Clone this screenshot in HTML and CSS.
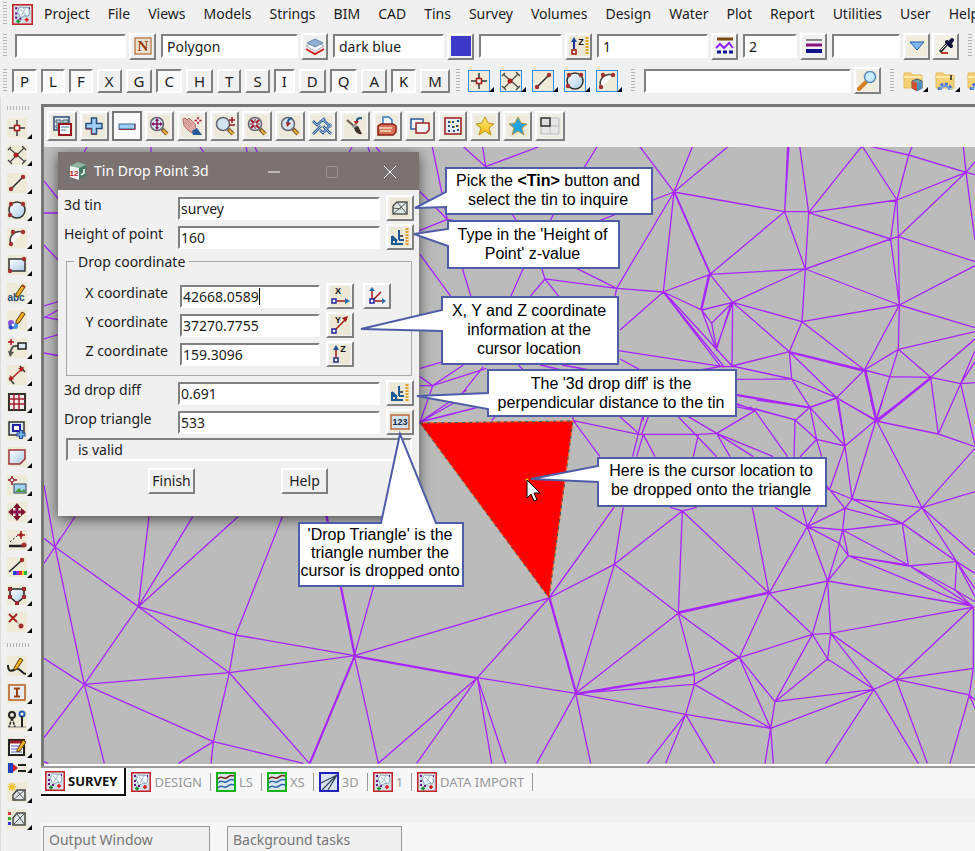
FILE: index.html
```html
<!DOCTYPE html>
<html lang="en">
<head>
<meta charset="utf-8">
<title>Tin Drop Point 3d</title>
<link rel="stylesheet" href="styles.css">
</head>
<body>
<svg class="sprite" aria-hidden="true">
  <defs>
    <linearGradient id="glass" x1="0" y1="0" x2="1" y2="1"><stop offset="0" stop-color="#fff"/><stop offset="1" stop-color="#a9cbe6"/></linearGradient>
    <linearGradient id="gold" x1="0" y1="0" x2="0" y2="1"><stop offset="0" stop-color="#fff27a"/><stop offset="1" stop-color="#f3b416"/></linearGradient>
  </defs>
  <symbol id="plan" viewBox="0 0 20 20"><rect x=".75" y=".75" width="18.500" height="18.500" fill="#cfe0e6" stroke="#c42028" stroke-width="1.500"/><path d="M6 6c0-3 3-4 5-2 3-2 7 0 5 3 2 3-1 6-4 4-2 3-6 1-5-1-2-1-2-3-1-4z" fill="#f4fafc" stroke="#86a8b8"/><path d="M8 5l6 6M13 4l-4 7" stroke="#a8c0cc"/><path d="M3 3h2v2H3zM3 8h2v2H3zM3 12h2v2H3zM7 13h2v2H7zM16 3h1v2h-1z" fill="#70108a"/><path d="M6 14.500v4M4 16.500h4" stroke="#0a8a2a" stroke-width="1.500"/><path d="M14 13v4M12 15h4" stroke="#e8101a" stroke-width="1.500"/></symbol>
  <symbol id="section" viewBox="0 0 20 20"><rect x="1" y="1" width="18" height="18" fill="#d8e8ea" stroke="#12b41a" stroke-width="2"/><path d="M2 7c3-4 5 0 8-1s4-4 8-2" fill="none" stroke="#7c2020" stroke-width="1.500"/><path d="M2 11c3-4 5 0 8-1s4-4 8-2M2 16c3-4 5 0 8-1s4-4 8-2" fill="none" stroke="#3366b0" stroke-width="1.500"/></symbol>
  <symbol id="persp" viewBox="0 0 20 20"><rect x="1" y="1" width="18" height="18" fill="#d6e2f0" stroke="#2222b8" stroke-width="2"/><path d="M2 11L18 3 3 18M9 18L18 3" fill="none" stroke="#345" stroke-width="1.200"/><path d="M6 15L16 4" stroke="#345" stroke-dasharray="2 2"/></symbol>
  <symbol id="nbox" viewBox="0 0 20 20"><rect x="1" y="1" width="18" height="18" fill="#eceadc"/><rect x="2" y="2" width="16" height="16" fill="#e9e2d0" stroke="#a8541a"/></symbol>
  <symbol id="layers" viewBox="0 0 20 20"><path d="M1 13l9 5 9-5" fill="none" stroke="#c22" stroke-width="2"/><path d="M1 10l9-4 9 4-9 5z" fill="#fff" stroke="#aab"/><path d="M2 7l8-4 8 4-8 4z" fill="#8fb0d4" stroke="#6888a8"/></symbol>
  <symbol id="swatch" viewBox="0 0 20 20"><rect width="20" height="20" fill="#3b3bc8"/></symbol>
  <symbol id="zruler" viewBox="0 0 20 20"><rect width="20" height="20" fill="#ebe7d4"/><path d="M5 13V4" stroke="#1d2b9a" stroke-width="2"/><path d="M2 6l3-5 3 5z" fill="#1d4b9a"/><rect x="3" y="14" width="4" height="4" fill="#fff" stroke="#a01010" stroke-width="1.500"/><path d="M18 1v18" stroke="#e0a820" stroke-width="3" stroke-dasharray="2 1"/></symbol>
  <symbol id="styles" viewBox="0 0 20 20"><path d="M2 3h16" stroke="#7a4a12" stroke-width="3"/><path d="M1 12l4-4 4 4 5-5 4 5" fill="none" stroke="#8a20ff" stroke-width="2"/><path d="M2 16h4M8 16h4M14 16h4" stroke="#10108a" stroke-width="3"/></symbol>
  <symbol id="weights" viewBox="0 0 20 20"><path d="M2 4h16" stroke="#222"/><path d="M2 9h16" stroke="#8a1080" stroke-width="3"/><path d="M2 15h16" stroke="#10108a" stroke-width="4"/></symbol>
  <symbol id="down" viewBox="0 0 20 20"><rect width="20" height="20" fill="#f0ecda"/><path d="M3 6h14l-7 8z" fill="#7db8f0" stroke="#2158a8"/></symbol>
  <symbol id="dropper" viewBox="0 0 20 20"><rect width="20" height="20" fill="#f3f0e4"/><path d="M5 17h7" stroke="#c33" stroke-width="2"/><path d="M4 16l8-9" stroke="#333" stroke-width="3"/><path d="M5 14l6-6" stroke="#dde"/><path d="M11 6l4 4M13 8l3-4" stroke="#10103a" stroke-width="4" stroke-linecap="round"/></symbol>
  <symbol id="point" viewBox="0 0 20 20"><path d="M10 2v16M2 10h16" stroke="#333" stroke-width="1.500"/><rect x="7.500" y="7.500" width="5" height="5" fill="#fff" stroke="#a81414" stroke-width="1.500"/></symbol>
  <symbol id="cross" viewBox="0 0 20 20"><path d="M2 3l16 14M3 17L17 3M1 5l3-3M15 1l4 4M1 15l4 4M15 19l4-4" stroke="#444" stroke-width="1.200" fill="none"/><circle cx="9" cy="10" r="2.500" fill="#a82020"/></symbol>
  <symbol id="line" viewBox="0 0 20 20"><path d="M4 16L16 4" stroke="#222" stroke-width="1.500"/><circle cx="4" cy="16" r="2.200" fill="#a33030"/><circle cx="16" cy="4" r="2.200" fill="#a33030"/></symbol>
  <symbol id="circle" viewBox="0 0 20 20"><circle cx="10" cy="10" r="8" fill="url(#glass)" stroke="#333" stroke-width="1.500"/><circle cx="4" cy="4" r="2.200" fill="#a33030"/><circle cx="16" cy="4" r="2.200" fill="#a33030"/><circle cx="3" cy="15" r="2.200" fill="#a33030"/></symbol>
  <symbol id="arc" viewBox="0 0 20 20"><path d="M4 17C1 8 7 2 16 4L5 16" fill="#fff"/><path d="M4 17C1 8 7 2 16 4" fill="none" stroke="#444" stroke-width="1.500"/><circle cx="4" cy="16" r="2.200" fill="#a33030"/><circle cx="6" cy="4" r="2.200" fill="#a33030"/><circle cx="16" cy="4" r="2.200" fill="#a33030"/></symbol>
  <symbol id="rect" viewBox="0 0 20 20"><rect x="2" y="4" width="16" height="12" fill="url(#glass)" stroke="#333" stroke-width="1.500"/><circle cx="17" cy="4" r="2.200" fill="#a33030"/><circle cx="3" cy="16" r="2.200" fill="#a33030"/></symbol>
  <symbol id="pencil" viewBox="0 0 20 20"><path d="M9 11l6-9 3 2-6 9-3 1z" fill="#f0b020" stroke="#5a3a10"/><path d="M15 2l3 2" stroke="#b03020" stroke-width="2"/></symbol>
  <symbol id="paint" viewBox="0 0 20 20"><path d="M9 11l6-9 3 2-6 9-3 1z" fill="#f0b020" stroke="#5a3a10"/><circle cx="4" cy="13" r="3" fill="#8a50e0"/><circle cx="8" cy="16" r="3" fill="#4090f0"/><circle cx="4" cy="17" r="2.500" fill="#2b50d0"/><circle cx="6" cy="15" r="1.500" fill="#fff"/></symbol>
  <symbol id="leader" viewBox="0 0 20 20"><path d="M4 1v6M1 4h6" stroke="#b01020" stroke-width="1.500"/><path d="M12 8H8q-4 0-5 9" fill="none" stroke="#555" stroke-width="2"/><rect x="11" y="5" width="8" height="6" fill="#dbe8f2" stroke="#222" stroke-width="1.500"/><path d="M1 13l2 6 4-5z" fill="#555"/></symbol>
  <symbol id="dim" viewBox="0 0 20 20"><path d="M2 13l5 6M13 1l5 6" stroke="#333" stroke-width="1.500"/><path d="M4 14L15 4" stroke="#b02020" stroke-width="1.500"/><path d="M2 16l1-6 4 4zM17 2l-6 1 4 4z" fill="#b02020"/></symbol>
  <symbol id="grid" viewBox="0 0 20 20"><rect x="2" y="2" width="16" height="16" fill="#f4e8e8" stroke="#333" stroke-width="2"/><path d="M2 7h16M2 12h16M7 2v16M12 2v16" stroke="#a02030" stroke-width="1.500"/></symbol>
  <symbol id="addbox" viewBox="0 0 20 20"><rect x="2" y="2" width="15" height="13" fill="#dce8f0" stroke="#333" stroke-width="1.500"/><rect x="6" y="5" width="7" height="6" fill="#fff" stroke="#2020a0" stroke-width="2"/><path d="M14 10v9M9.500 14.500h9" stroke="#204890" stroke-width="4"/><path d="M14 11v7M10.500 14.500h7" stroke="#70b8f0" stroke-width="2"/></symbol>
  <symbol id="poly" viewBox="0 0 20 20"><path d="M2 3h16v9l-5 5H2z" fill="url(#glass)" stroke="#a03038" stroke-width="1.500"/></symbol>
  <symbol id="image" viewBox="0 0 20 20"><rect x="7" y="9" width="12" height="9" fill="#9fd2f4" stroke="#345"/><path d="M8 17l4-4 3 3 2-2 2 3z" fill="#4a9a3a"/><path d="M5 1v9M1 5h9" stroke="#8a1020" stroke-width="1.500"/><circle cx="5" cy="5" r="2" fill="#fff" stroke="#8a1020"/></symbol>
  <symbol id="move" viewBox="0 0 20 20"><path d="M10 3v14M3 10h14" stroke="#8a1050" stroke-width="3"/><path d="M10 1l4 5H6zM10 19l4-5H6zM1 10l5-4v8zM19 10l-5-4v8z" fill="#7a1030"/></symbol>
  <symbol id="offset" viewBox="0 0 20 20"><path d="M2 16h15" stroke="#222" stroke-width="2.500"/><path d="M3 12l7-6" stroke="#222" stroke-dasharray="2 2"/><path d="M14 1v8M10 5h8" stroke="#a02020" stroke-width="1.500"/><circle cx="14" cy="5" r="2" fill="#a02020"/><circle cx="17" cy="15" r="2.500" fill="#a33030"/></symbol>
  <symbol id="colour" viewBox="0 0 20 20"><path d="M2 15L15 3" stroke="#222" stroke-width="1.500"/><circle cx="15" cy="3" r="2.200" fill="#a33030"/><path d="M6 14h3v4H6z" fill="#2040e0"/><path d="M9 14h3v4H9z" fill="#8030e0"/><path d="M12 14h3v4h-3z" fill="#e03030"/><path d="M15 14h2v4h-2z" fill="#f0d020"/><path d="M17 14h3v4h-3z" fill="#20c040"/></symbol>
  <symbol id="shield" viewBox="0 0 20 20"><path d="M3 4h14v8l-7 6-7-6z" fill="url(#glass)" stroke="#222" stroke-width="1.500"/><path d="M1 2h4v4H1zM15 2h4v4h-4zM1 10h4v4H1zM15 10h4v4h-4zM8 16h4v4H8z" fill="#a02830"/></symbol>
  <symbol id="delete" viewBox="0 0 20 20"><path d="M2 2l8 8M10 2l-8 8" stroke="#a02020" stroke-width="1.800"/><path d="M10 10l6 6" stroke="#999"/><circle cx="14" cy="14" r="2.500" fill="#a33030"/></symbol>
  <symbol id="sketch" viewBox="0 0 20 20"><path d="M1 9c0 8 4 6 8 4s6 5 10 5" fill="none" stroke="#222" stroke-width="2"/><path d="M7 12l6-10 3 2-6 9-3 1z" fill="#f0b020" stroke="#5a3a10"/></symbol>
  <symbol id="ibox" viewBox="0 0 20 20"><rect x="2" y="2" width="16" height="15" fill="#e6ecf2" stroke="#b85a20" stroke-width="1.500"/><path d="M10 5v9M7 5.500h6M7 13.500h6" stroke="#a04010" stroke-width="2"/></symbol>
  <symbol id="rods" viewBox="0 0 20 20"><path d="M1 17h18" stroke="#888"/><circle cx="5" cy="5" r="3" fill="none" stroke="#222" stroke-width="2"/><path d="M5 8l-3 9M5 8l3 9" stroke="#222" stroke-width="1.500" stroke-dasharray="3 1"/><circle cx="15" cy="4" r="2.500" fill="#fff" stroke="#2060b0" stroke-width="2"/><path d="M15 6v11" stroke="#222" stroke-width="2"/></symbol>
  <symbol id="note" viewBox="0 0 20 20"><rect x="2" y="3" width="15" height="15" fill="#fff" stroke="#222" stroke-width="2"/><path d="M3 5h13" stroke="#a02030" stroke-width="3"/><path d="M4 9h11M4 12h11M4 15h11" stroke="#4a60c0"/><path d="M10 13l6-10 3 2-6 9-3 1z" fill="#f0b020" stroke="#5a3a10"/></symbol>
  <symbol id="flag" viewBox="0 0 20 20"><path d="M1 5h5v10H1z" fill="#2040c0"/><path d="M6 6l5 4-5 4z" fill="#d02030"/><path d="M11 7h8M11 13h8" stroke="#222" stroke-width="2"/></symbol>
  <symbol id="tin" viewBox="0 0 20 20"><path d="M3 16V8l4-4h10v12z" fill="#dfe6e8" stroke="#555" stroke-width="1.500"/><path d="M3 16l14-12M7 4l10 12M3 10l8 1" stroke="#555"/></symbol>
  <symbol id="tinnew" viewBox="0 0 20 20"><path d="M6 18v-5l4-5h8v10z" fill="#dfe6e8" stroke="#444" stroke-width="1.500"/><path d="M6 18L18 8M10 9l8 9" stroke="#555"/><path d="M5 1v8M1 5h8M2 2l6 6M8 2L2 8" stroke="#f0c030" stroke-width="1.500"/></symbol>
  <symbol id="tinset" viewBox="0 0 20 20"><path d="M6 16V9l4-5h8v12z" fill="#dfe6e8" stroke="#444" stroke-width="1.500"/><path d="M6 16L18 4M10 5l8 11" stroke="#555"/><path d="M1 3h3v3H1z" fill="#d33"/><path d="M1 8h3v3H1z" fill="#3a3"/><path d="M1 13h3v3H1z" fill="#33d"/></symbol>
  <symbol id="glassfind" viewBox="0 0 20 20"><rect width="20" height="20" fill="#f1eddd"/><path d="M2 18l7-7" stroke="#d88020" stroke-width="4" stroke-linecap="round"/><circle cx="13" cy="6" r="5.500" fill="#c8ecff" stroke="#5b90c0" stroke-width="1.500"/></symbol>
  <symbol id="folder" viewBox="0 0 20 20"><path d="M1 2h7l2 2h9v13H1z" fill="#f4d274" stroke="#e2bb55"/><path d="M1 6h18" stroke="#fbe7a8" stroke-width="2"/></symbol>
  <symbol id="foldercube" viewBox="0 0 20 20"><use href="#folder"/><path d="M9 10l5-2 5 2v7l-5 3-5-3z" fill="#70a0a8" stroke="#556"/><path d="M9 10l5 2v8l-5-3z" fill="#d05030"/><path d="M14 12l5-2v7l-5 3z" fill="#5090c0"/></symbol>
  <symbol id="foldergear" viewBox="0 0 20 20"><use href="#folder"/><path d="M16 4v5" stroke="#222" stroke-width="1.500"/><path d="M4 19a6 6 0 0 1 12 0" fill="none" stroke="#4a78d0" stroke-width="3" stroke-dasharray="3 1.500"/><path d="M6 19a4 4 0 0 1 8 0" fill="none" stroke="#6a98e8" stroke-width="2"/></symbol>
  <symbol id="windows" viewBox="0 0 20 20"><rect x="2" y="1" width="15" height="13" fill="#e8eef6" stroke="#2a4a7a" stroke-width="1.500"/><path d="M4 4h5v3H4zM11 4h5v3h-5zM4 9h4v3H4z" fill="#b9cfe8" stroke="#466"/><rect x="7" y="8" width="12" height="11" fill="#f6f6f6" stroke="#9a1420" stroke-width="2"/><path d="M9 11h8M9 14h5" stroke="#8ab" stroke-width="1.500"/></symbol>
  <symbol id="plus" viewBox="0 0 20 20"><path d="M7.500 2h5v5.500H18v5h-5.500V18h-5v-5.500H2v-5h5.500z" fill="#9fd0f4" stroke="#284c80" stroke-width="1.500"/><path d="M2 13h5.500v5h5" fill="none" stroke="#903040"/></symbol>
  <symbol id="minus" viewBox="0 0 20 20"><rect x="2" y="8" width="16" height="5" fill="#9fd0f4" stroke="#406890"/><path d="M2 13.500h16V8" fill="none" stroke="#903040"/></symbol>
  <symbol id="lens" viewBox="0 0 20 20"><path d="M13 13l5 5" stroke="#7a5a3a" stroke-width="4"/><path d="M14 14l4 4" stroke="#f0b030" stroke-width="2"/><circle cx="8" cy="8" r="6.500" fill="#d3e4ee" stroke="#667" stroke-width="1.500"/></symbol>
  <symbol id="extent" viewBox="0 0 20 20"><use href="#lens"/><path d="M8 4v8M4 8h8" stroke="#8a1060" stroke-width="1.500"/><path d="M8 2l2 3H6zM8 14l2-3H6zM2 8l3-2v4zM14 8l-3-2v4z" fill="#8a1060"/></symbol>
  <symbol id="pan" viewBox="0 0 20 20"><path d="M1 3l2-1 2 2 2-2 6 6 1 6-4 3-4-3-4-4z" fill="#e2a8a4" stroke="#b07070"/><path d="M3 6l5 5M5 4l5 5" stroke="#c08080"/><path d="M10 15l5-3 5 7H11z" fill="#285a98"/><path d="M16 1v7M12.500 4.500h7" stroke="#a01828" stroke-width="1.500"/><circle cx="16" cy="4.500" r="1.200" fill="#fff"/></symbol>
  <symbol id="zoompm" viewBox="0 0 20 20"><use href="#lens"/><path d="M17 1v6M14 4h6M14 9h6" stroke="#a01828" stroke-width="1.500"/></symbol>
  <symbol id="shrink" viewBox="0 0 20 20"><use href="#lens"/><path d="M4 4l3 3M12 4L9 7M4 12l3-3M12 12L9 9" stroke="#a01020" stroke-width="2"/><path d="M8 3v3M8 10v3M3 8h3M10 8h3" stroke="#a01020"/></symbol>
  <symbol id="prev" viewBox="0 0 20 20"><use href="#lens"/><path d="M12 2C7 3 8 6 8 8" fill="none" stroke="#225a90" stroke-width="2"/><path d="M6 6l5 1-4 4z" fill="#b02020"/></symbol>
  <symbol id="ticks" viewBox="0 0 20 20"><path d="M1 5l4 4 8-7M1 18l8-8M10 3l9 8M11 10l8 8M8 14l3 3 8-9" fill="none" stroke="#345a90" stroke-width="2.500"/><path d="M1 5l4 4 8-7M1 18l8-8M10 3l9 8M11 10l8 8M8 14l3 3 8-9" fill="none" stroke="#90c8f0"/></symbol>
  <symbol id="brush" viewBox="0 0 20 20"><path d="M2 4l8 7" stroke="#6a5a4a" stroke-width="2"/><path d="M8 9l4 3" stroke="#999" stroke-width="4"/><path d="M9 12l4-2 4 8q-6 1-8-6z" fill="#3a3028"/><path d="M17 2C11 2 12 4 12 7" fill="none" stroke="#225a90" stroke-width="2"/><path d="M9 5h5l-3 4z" fill="#b02020"/></symbol>
  <symbol id="print" viewBox="0 0 20 20"><path d="M6 9V1h6l3 3v5z" fill="#f2f8ff" stroke="#3a7ac0" stroke-width="1.500"/><path d="M1 10l3-2h12l3 2v6l-3 3H1z" fill="#d87058" stroke="#8a2018" stroke-width="1.500"/><path d="M2 12h13M3 15h11" stroke="#f2e0c0" stroke-width="1.500"/></symbol>
  <symbol id="copies" viewBox="0 0 20 20"><rect x="1" y="3" width="12" height="10" fill="#eef4fa" stroke="#2a5a98" stroke-width="1.500"/><path d="M6 7h13v7l-3 3H6z" fill="#f2f2f2" stroke="#a02028" stroke-width="1.500"/></symbol>
  <symbol id="building" viewBox="0 0 20 20"><rect x="2" y="2" width="16" height="16" fill="#e6eef4" stroke="#9a1a20" stroke-width="1.500"/><path d="M5 5h2v2H5zM9 5h2v2H9zM14 4h2v2h-2zM5 9h2v2H5zM9 10h2v2H9zM13 9h2v2h-2zM5 14h2v2H5zM10 14h2v2h-2zM14 13h2v2h-2z" fill="#23508a"/><path d="M7 5h1v2H7zM11 10h1v2h-1zM15 9h1v2h-1z" fill="#d8a020"/></symbol>
  <symbol id="star" viewBox="0 0 20 20"><path d="M10 1l3 6 6 1-5 4 2 7-6-4-6 4 2-7-5-4 6-1z" fill="url(#gold)" stroke="#c09018"/></symbol>
  <symbol id="bluestar" viewBox="0 0 20 20"><path d="M10 1l3 6 6 1-5 4 2 7-6-4-6 4 2-7-5-4 6-1z" fill="#22a2e0" stroke="#b8963c"/></symbol>
  <symbol id="quad" viewBox="0 0 20 20"><rect width="20" height="20" fill="#efefef"/><path d="M1 2h18v16H1zM10 2v16M1 10h18" fill="#e6e6e6" stroke="#bbb"/><rect x="1" y="2" width="9" height="8" fill="#ddd" stroke="#333" stroke-width="1.500"/></symbol>
  <symbol id="measure" viewBox="0 0 20 20"><path d="M2 9v9M2 9l5 5M1 17h12M2 13h4v4M9 3v10M9 13h5" fill="none" stroke="#1c5a96" stroke-width="2"/><path d="M10 9h3" stroke="#222" stroke-width="1.500"/><path d="M17 1v18" stroke="#e0a030" stroke-width="3" stroke-dasharray="2 1"/></symbol>
  <symbol id="num" viewBox="0 0 20 20"><rect x="1" y="3" width="18" height="14" fill="#cfe2f2" stroke="#c06a3a" stroke-width="1.500"/></symbol>
  <symbol id="xaxis" viewBox="0 0 20 20"><rect x="2" y="13" width="4" height="4" fill="#fff" stroke="#22229a" stroke-width="1.500"/><path d="M7 15h9" stroke="#a01818" stroke-width="1.500"/><path d="M15 12l5 3-5 3z" fill="#2a70b0"/></symbol>
  <symbol id="yaxis" viewBox="0 0 20 20"><rect x="2" y="14" width="4" height="4" fill="#fff" stroke="#22229a" stroke-width="1.500"/><path d="M6 14l10-10" stroke="#a01818" stroke-width="1.500"/><path d="M12 3l6-2-2 6z" fill="#a01818"/></symbol>
  <symbol id="zaxis" viewBox="0 0 20 20"><rect x="4" y="14" width="4" height="4" fill="#fff" stroke="#22229a" stroke-width="1.500"/><path d="M6 13V4" stroke="#a01818" stroke-width="1.500"/><path d="M3 6l3-5 3 5z" fill="#1a5090"/></symbol>
  <symbol id="axes" viewBox="0 0 20 20"><path d="M5 15V4M5 15h11M5 15l9-9" fill="none" stroke="#a01818" stroke-width="1.500"/><path d="M2 5l3-4 3 4zM15 12l4 3-4 3z" fill="#2a70b0"/><rect x="3" y="13" width="4" height="4" fill="#fff" stroke="#22229a" stroke-width="1.500"/></symbol>
  <symbol id="cube" viewBox="0 0 20 20"><path d="M2 5l8-4 8 3v11l-7 4-9-3z" fill="#4a7a66"/><path d="M2 5l8-4 8 3-7 3z" fill="#8fb8a4"/><path d="M2 5l9 2v12l-9-3z" fill="#f4f4f4"/><path d="M13 14l3-2V8" fill="none" stroke="#fff" stroke-width="1.500"/></symbol>
</svg>

<header>
  <nav class="menubar" aria-label="Main menu">
    <span class="grip"></span>
    <svg class="logo" aria-hidden="true"><use href="#plan"/></svg>
    <a href="#">Project</a><a href="#">File</a><a href="#">Views</a><a href="#">Models</a><a href="#">Strings</a><a href="#">BIM</a><a href="#">CAD</a><a href="#">Tins</a><a href="#">Survey</a><a href="#">Volumes</a><a href="#">Design</a><a href="#">Water</a><a href="#">Plot</a><a href="#">Report</a><a href="#">Utilities</a><a href="#">User</a><a href="#">Help</a>
  </nav>

  <div class="bar fields">
    <span class="grip"></span>
    <input class="w-name" aria-label="Name"><button class="b" aria-label="Names"><svg viewBox="0 0 20 20"><use href="#nbox"/><text x="10" y="15" text-anchor="middle" class="t-n">N</text></svg></button>
    <input class="w-model" aria-label="Model" value="Polygon"><button class="b" aria-label="Models"><svg><use href="#layers"/></svg></button>
    <input class="w-name" aria-label="Colour" value="dark blue"><button class="b" aria-label="Colours"><svg><use href="#swatch"/></svg></button>
    <input class="w-height" aria-label="Height"><button class="b" aria-label="Heights"><svg viewBox="0 0 20 20"><use href="#zruler"/><text x="12" y="9" text-anchor="middle" class="t-z">Z</text></svg></button>
    <input class="w-name" aria-label="Linestyle" value="1"><button class="b" aria-label="Linestyles"><svg><use href="#styles"/></svg></button>
    <input class="w-weight" aria-label="Weight" value="2"><button class="b" aria-label="Weights"><svg><use href="#weights"/></svg></button>
    <input class="w-tin" aria-label="Tinable"><button class="b" aria-label="Choose"><svg><use href="#down"/></svg></button>
    <button class="b tight" aria-label="Pick attributes"><svg><use href="#dropper"/></svg></button>
    <span class="grip"></span>
  </div>

  <div class="bar snaps">
    <span class="grip"></span>
    <div class="letters">
      <button class="on">P</button><button class="on">L</button><button class="on">F</button><button>X</button><button>G</button><button class="on">C</button><button>H</button><button>T</button><button>S</button><button class="on">I</button><button>D</button><button class="on">Q</button><button>A</button><button class="on">K</button><button>M</button>
    </div>
    <span class="grip"></span>
    <div class="flyouts">
      <button class="fly framed" aria-label="Point"><svg><use href="#point"/></svg></button>
      <button class="fly framed" aria-label="Intersection"><svg><use href="#cross"/></svg></button>
      <button class="fly framed" aria-label="Line"><svg><use href="#line"/></svg></button>
      <button class="fly framed" aria-label="Circle"><svg><use href="#circle"/></svg></button>
      <button class="fly framed" aria-label="Arc"><svg><use href="#arc"/></svg></button>
    </div>
    <span class="grip"></span>
    <input class="w-search" aria-label="Search"><button class="b" aria-label="Find"><svg><use href="#glassfind"/></svg></button>
    <span class="grip"></span>
    <div class="flyouts">
      <button class="fly plain" aria-label="Project folder"><svg><use href="#foldercube"/></svg></button>
      <button class="fly plain" aria-label="Setup folder"><svg><use href="#foldergear"/></svg></button>
      <button class="fly plain" aria-label="User folder"><svg><use href="#foldergear"/></svg></button>
    </div>
  </div>
</header>

<main>
  <aside class="tools" aria-label="Tools">
    <span class="grip flat"></span>
    <div class="stack">
      <button class="fly" aria-label="Point"><svg><use href="#point"/></svg></button>
      <button class="fly" aria-label="Intersection"><svg><use href="#cross"/></svg></button>
      <button class="fly" aria-label="Line"><svg><use href="#line"/></svg></button>
      <button class="fly" aria-label="Circle"><svg><use href="#circle"/></svg></button>
      <button class="fly" aria-label="Arc"><svg><use href="#arc"/></svg></button>
      <button class="fly" aria-label="Rectangle"><svg><use href="#rect"/></svg></button>
      <button class="fly" aria-label="Text"><svg viewBox="0 0 20 20"><text x="9" y="18" text-anchor="middle" class="t-abc">abc</text><use href="#pencil"/></svg></button>
      <button class="fly" aria-label="Symbol"><svg><use href="#paint"/></svg></button>
      <button class="fly" aria-label="Leader"><svg><use href="#leader"/></svg></button>
      <button class="fly" aria-label="Dimension"><svg><use href="#dim"/></svg></button>
      <button class="fly" aria-label="Table"><svg><use href="#grid"/></svg></button>
      <button class="fly" aria-label="Add frame"><svg><use href="#addbox"/></svg></button>
      <button class="fly" aria-label="Polygon"><svg><use href="#poly"/></svg></button>
      <button class="fly" aria-label="Image"><svg><use href="#image"/></svg></button>
      <button class="fly" aria-label="Move"><svg><use href="#move"/></svg></button>
      <button class="fly" aria-label="Offset"><svg><use href="#offset"/></svg></button>
      <button class="fly" aria-label="Recolour"><svg><use href="#colour"/></svg></button>
      <button class="fly" aria-label="Boundary"><svg><use href="#shield"/></svg></button>
      <button class="fly" aria-label="Delete"><svg><use href="#delete"/></svg></button>
    </div>
    <span class="grip flat"></span>
    <div class="stack second">
      <button class="fly" aria-label="Sketch"><svg><use href="#sketch"/></svg></button>
      <button class="fly" aria-label="Inquire"><svg><use href="#ibox"/></svg></button>
      <button class="fly" aria-label="Survey rods"><svg><use href="#rods"/></svg></button>
      <button class="fly" aria-label="Edit notes"><svg><use href="#note"/></svg></button>
      <button class="fly short" aria-label="Labels"><svg><use href="#flag"/></svg></button>
      <button class="fly" aria-label="New tin"><svg><use href="#tinnew"/></svg></button>
      <button class="fly" aria-label="Tin settings"><svg><use href="#tinset"/></svg></button>
    </div>
  </aside>

  <div class="work">
    <section class="view">
      <div class="viewbar">
        <button class="b" aria-label="View menu"><svg><use href="#windows"/></svg></button>
        <button class="b" aria-label="Add models"><svg><use href="#plus"/></svg></button>
        <button class="b active" aria-label="Remove models"><svg><use href="#minus"/></svg></button>
        <button class="b" aria-label="Fit"><svg><use href="#extent"/></svg></button>
        <button class="b" aria-label="Pan"><svg><use href="#pan"/></svg></button>
        <button class="b" aria-label="Zoom"><svg><use href="#zoompm"/></svg></button>
        <button class="b" aria-label="Shrink"><svg><use href="#shrink"/></svg></button>
        <button class="b" aria-label="Previous view"><svg><use href="#prev"/></svg></button>
        <button class="b" aria-label="Toggles"><svg><use href="#ticks"/></svg></button>
        <button class="b" aria-label="Redraw"><svg><use href="#brush"/></svg></button>
        <button class="b" aria-label="Plot"><svg><use href="#print"/></svg></button>
        <button class="b" aria-label="Copy view"><svg><use href="#copies"/></svg></button>
        <button class="b" aria-label="Buildings"><svg><use href="#building"/></svg></button>
        <button class="b" aria-label="Favourites"><svg><use href="#star"/></svg></button>
        <button class="b" aria-label="Shared favourites"><svg><use href="#bluestar"/></svg></button>
        <button class="b" aria-label="Layout"><svg><use href="#quad"/></svg></button>
      </div>

      <div class="canvas">
        <svg class="mesh" viewBox="44 147 931 640" preserveAspectRatio="xMinYMin slice" aria-hidden="true">
          <!-- north-east -->
          <g transform="translate(620 140) scale(.33333)">
            <path d="M58 18L162 156L218 18M326 18L162 156L494 215M162 156L270 403M164 156L272 403M162 156L130 456M162 156L-10 445M162 156L-115 262M494 215L507 18M494 215L503 18M494 215H566M494 215L556 387M494 215L270 403M566 218L539 18M566 218L726 18L831 180M566 218L831 180M566 218L812 297M566 218L556 387M745 18L866 45L1038 97M831 180L866 45L877 18M831 180L1038 97M831 180L835 290M828 180L812 297L835 290L1038 97M835 290L1065 365M812 297L556 387M812 297L838 495M835 290L838 495M1030 18L1038 97L1065 65M1038 97L1065 104M1038 97L1065 300M556 387L270 403M556 387L338 487M556 387L838 495M556 387L546 545M838 495L1065 377M838 495L1065 563M838 495L546 545M838 495L733 690M838 495L835 628M546 545L338 487M546 545L508 635M546 545L733 690M270 403L130 456M270 403L245 510M266 403L242 510M270 403L338 487M245 510L338 487M130 456L245 510L275 550L338 487M245 510L288 627L338 487M275 550L290 627L334 487M338 487L336 678M338 487L508 635M130 456L302 680M130 456L312 680M132 456L336 678M336 678L508 635M336 678L515 717M300 680H348M130 456L0 570M130 456L-10 445M-10 631L310 680M240 690L310 678M0 657L65 692M508 635L515 717M508 635L733 690M510 638L733 694M508 635L650 773M348 718L515 717L570 802M515 717L650 773L733 690M570 802L650 773L768 843M650 773L675 918M733 690L768 843M737 690L771 843M733 690L835 628M733 690L808 710L932 712M835 628L1065 575M835 628L932 712M835 628L768 843M932 712L1065 597M932 712L768 843M935 714L771 846M932 712L955 882M932 712L1022 731L1065 728M1022 731L1065 632M1022 731L1065 665M1022 731L955 882M1022 731L1065 915M768 843L955 882L1065 920M348 763L570 802M348 766L570 804M348 790L405 812L348 800M348 793L527 840L570 802M405 806L527 840M390 800L405 812"/>
          </g>
          <!-- south-east -->
          <g transform="translate(560 400) scale(.33333)">
            <path d="M948 60L855 138M948 60L876 297M948 60L1086 323L1245 145M750 22L855 138M750 22L770 118L785 170M705 60L770 118L855 138M705 60L702 170M770 118L720 170M855 138L810 265M855 138L876 297M835 0L855 138M932 0L948 60L968 0M948 60L1030 0M840 0L948 60M585 32L470 100M585 32L683 170M470 100L415 103H235L40 62M470 100L510 170M470 100L640 170M470 100L580 170M385 50L470 100M355 50L470 170M415 103L400 170M245 103L265 50M235 100L248 50M235 100L218 170M250 103L230 170M250 103L285 170M180 50L235 100M40 62L120 170M590 0L750 22L835 -7M798 265L876 297M798 255L855 325L876 297L1086 323M876 297L1027 370L855 325L742 380M855 325L848 390M742 380L848 390L1027 370L1086 323M1027 370L1045 495M1027 370L1190 485L1086 323L1245 465M1086 323L1245 275M742 380L727 322M742 380L775 322M742 380L645 322M742 380L838 430M742 380L627 580M742 380L803 543M848 390L1045 495M848 390L865 467M848 390L838 430L865 467M838 430L803 543L865 467L1045 495M865 467L1238 620M865 467L1045 498L1190 485M1045 495L1185 570L1245 605M1045 495L1238 620M1190 485L1185 570L1238 620M1190 485L1245 520M1190 485L1245 590M1190 485L1245 566M803 543L1238 618M803 543L627 580M803 543L757 703M803 543L812 700L1238 622L1008 838M1240 622V805L1008 838M1240 805L1228 885L1008 838M1228 885L1170 1090M1228 885L1245 925M1228 885L1245 900M627 580L757 703M627 580L538 773M627 580L355 640M627 576L355 636M627 580L367 333M627 580L577 322M757 703L812 700M757 703L538 773M757 703L645 905M757 703L803 777L812 700M803 777L645 905M803 777L942 868L812 700L1008 838L942 868L645 905M942 868L632 985M942 868L797 1090M942 868L1075 1090M1008 838L1102 1090M538 773L645 905L632 985L538 773L403 822M538 773L403 853M538 773L355 640M632 985L615 1090M632 985L640 1090M632 985L403 853M632 985L377 943M355 640L403 822V853L377 943L262 1090M377 943L317 1090M377 943L464 1090M377 943L47 880L403 822M47 884L403 824M47 880L403 853M47 880L355 640M47 880L163 493M47 880L-33 594M50 880L-30 594M47 880L-249 833M47 880L-70 1090M47 880L92 1090M355 640L163 493L367 333M163 493L190 322M163 493L-33 594L162 322M367 333L355 640M330 322L367 333L410 322"/>
          </g>
          <!-- south-west -->
          <g transform="translate(40 590) scale(.33333)">
            <path d="M133 283L295 50M133 283L568 248M133 283L520 455M12 205L133 283L12 443M133 283L193 520M133 283L45 -129L12 -315M45 -129L12 -155M45 -129L60 -155M45 -129L12 -80M45 -129L105 -220M45 -129L295 50L587 135M295 50L568 248M295 50L327 -220M295 50L458 -220M295 50L594 -220M587 135L727 -220M587 135L568 248L520 455L513 520M943 197L587 135M943 197L568 248L808 520M943 197L858 -222M946 197L861 -222M943 197L1060 -222M943 197L1527 24M943 197L1312 263M943 200L1312 266M943 197L808 520M945 199L811 520M943 197L1015 520L1312 263M520 455L415 520M520 455L790 520M1312 263L1130 520M1312 263L1355 520M1312 263L1397 520M1312 263L1527 24M12 515L25 520"/>
          </g>
          <!-- north-west -->
          <g transform="translate(415 150) scale(.33333)">
            <path d="M52 -9L97 208L15 125M146 -9L212 50L203 -9M370 -9L212 50M546 -9L490 80M97 208L0 247M97 208L168 440M97 208L130 214M15 313L108 440M325 355L287 440M380 355L390 387L605 415M390 387L345 440M390 387L432 440M485 355L605 415L600 440M280 175L305 213M425 175L405 213M15 655L85 635M15 680L53 707H15M53 707L215 655M53 707L15 816L120 757L205 650M53 707L145 645M15 816L155 720M15 816L215 765M310 645L325 660M375 645L440 660M440 645L525 660M15 816L120 790M470 790L476 812M685 800V812M240 800L230 812"/>
          </g>
          <!-- slivers beside the dialog -->
          <path d="M44 181L60 201M44 213H60M44 245L60 262M44 306L60 301M44 318L60 309M44 317L60 320M44 339L60 334M44 353L60 356M87 147L82 156M151 147V156M200 147L206 156M246 147L248 156M255 147L259 156M352 147L347 156M368 147L371 156M376 147L383 156"/>
          <path class="hit" d="M420 423L573 421L549 598z"/>
          <path class="hit-edge" d="M420 423L573 421L549 598z"/>
          <circle cx="527" cy="480" r="1.500" fill="#ffd800"/>
        </svg>

        <form class="dialog" aria-labelledby="dlg-title">
          <div class="titlebar">
            <svg viewBox="0 0 20 20" aria-hidden="true"><use href="#cube"/><text x="6" y="15" text-anchor="middle" class="t-cube">12</text></svg>
            <h1 id="dlg-title">Tin Drop Point 3d</h1>
            <button type="button" aria-label="Minimise"><svg viewBox="0 0 12 12"><path d="M0 6h12"/></svg></button>
            <button type="button" aria-label="Maximise" disabled><svg viewBox="0 0 12 12"><path d="M.5.500h11v11H.5z"/></svg></button>
            <button type="button" aria-label="Close"><svg viewBox="0 0 12 12"><path d="M0 0l12 12M12 0L0 12"/></svg></button>
          </div>
          <div class="panel">
            <div class="row"><label for="tin-name">3d tin</label><input id="tin-name" value="survey"><button type="button" class="b cream" aria-label="Tin"><svg><use href="#tin"/></svg></button></div>
            <div class="row"><label for="hgt">Height of point</label><input id="hgt" value="160"><button type="button" class="b cream" aria-label="Measure height"><svg><use href="#measure"/></svg></button></div>
            <fieldset>
              <legend>Drop coordinate</legend>
              <div class="row"><label for="cx">X coordinate</label><span class="edit"><input id="cx" value="42668.0589"><i class="caret"></i></span><button type="button" class="b cream" aria-label="Pick X"><svg viewBox="0 0 20 20"><use href="#xaxis"/><text x="8" y="8" text-anchor="middle" class="t-z">X</text></svg></button><button type="button" class="b" aria-label="Pick XYZ"><svg><use href="#axes"/></svg></button></div>
              <div class="row"><label for="cy">Y coordinate</label><span class="edit"><input id="cy" value="37270.7755"></span><button type="button" class="b cream" aria-label="Pick Y"><svg viewBox="0 0 20 20"><use href="#yaxis"/><text x="8" y="8" text-anchor="middle" class="t-z">Y</text></svg></button></div>
              <div class="row"><label for="cz">Z coordinate</label><span class="edit"><input id="cz" value="159.3096"></span><button type="button" class="b cream" aria-label="Pick Z"><svg viewBox="0 0 20 20"><use href="#zaxis"/><text x="13" y="8" text-anchor="middle" class="t-z">Z</text></svg></button></div>
            </fieldset>
            <div class="row"><label for="diff">3d drop diff</label><input id="diff" value="0.691"><button type="button" class="b cream" aria-label="Measure difference"><svg><use href="#measure"/></svg></button></div>
            <div class="row"><label for="tri">Drop triangle</label><input id="tri" value="533"><button type="button" class="b cream" aria-label="Triangle number"><svg viewBox="0 0 20 20"><use href="#num"/><text x="10" y="13" text-anchor="middle" class="t-num">123</text></svg></button></div>
            <output class="status">is valid</output>
            <div class="actions"><button type="button">Finish</button><button type="button">Help</button></div>
          </div>
        </form>

        <svg class="balloons" viewBox="44 147 931 640" preserveAspectRatio="xMinYMin slice" aria-hidden="true">
          <path d="M446 168H652V214H446V207L415 208L446 192z"/>
          <path d="M448 221H619V268H448V246L414 234L448 229z"/>
          <path d="M442 297H618V364H442V331L361 329L442 310z"/>
          <path d="M488 370H736V416H488V409L417 396L488 393z"/>
          <path d="M598 458H826V506H598V482L531 479L598 466z"/>
          <path d="M299 523H381L400 434L436 523H463V586H299z"/>
          <path class="pointer" d="M527 480v18l4-4 3 7 3-1-3-7h6z"/>
        </svg>
        <p class="note n1">Pick the <b>&lt;Tin&gt;</b> button and<br>select the tin to inquire</p>
        <p class="note n2">Type in the 'Height of<br>Point' z-value</p>
        <p class="note n3">X, Y and Z coordinate<br>information at the<br>cursor location</p>
        <p class="note n4">The '3d drop diff' is the<br>perpendicular distance to the tin</p>
        <p class="note n5">Here is the cursor location to<br>be dropped onto the triangle</p>
        <p class="note n6">'Drop Triangle' is the<br>triangle number the<br>cursor is dropped onto</p>
      </div>
    </section>

    <nav class="tabs" aria-label="Views">
      <a href="#" class="current"><svg><use href="#plan"/></svg>SURVEY</a>
      <a href="#"><svg><use href="#plan"/></svg>DESIGN</a>
      <a href="#"><svg><use href="#section"/></svg>LS</a>
      <a href="#"><svg><use href="#section"/></svg>XS</a>
      <a href="#"><svg><use href="#persp"/></svg>3D</a>
      <a href="#"><svg><use href="#plan"/></svg>1</a>
      <a href="#"><svg><use href="#plan"/></svg>DATA IMPORT</a>
    </nav>
    <footer class="docks">
      <button>Output Window</button>
      <button>Background tasks</button>
    </footer>
  </div>
</main>
</body>
</html>
```
FILE: styles.css
```css
* { box-sizing: border-box; }

body {
  margin: 0;
  min-height: 100vh;
  display: flex;
  flex-direction: column;
  overflow: hidden;
  background: #f0f0f0;
  color: #1c1c1c;
  font: 14px/20px "Noto Sans", "Open Sans", sans-serif;
}

button, input { font: inherit; color: inherit; }
a { color: inherit; text-decoration: none; }
.sprite { position: absolute; width: 0; height: 0; }

.t-n { font: bold 15px "Liberation Serif", serif; fill: #9a3a0a; }
.t-z { font: bold 9px "Liberation Sans", sans-serif; fill: #111; }
.t-abc { font: bold 10px "Liberation Sans", sans-serif; fill: #1c4a78; }
.t-num { font: bold 9px "Liberation Sans", sans-serif; fill: #1a2a3a; }
.t-cube { font: bold 8px "Liberation Sans", sans-serif; fill: #d02020; }

/* Shared controls */
.grip {
  flex: none;
  width: 4px;
  height: 24px;
  background: repeating-linear-gradient(#b4b4b4 0 1px, #f0f0f0 1px 3px);
}
.grip.flat {
  width: 24px;
  height: 4px;
  margin-left: 6px;
  background: repeating-linear-gradient(90deg, #b4b4b4 0 1px, #f0f0f0 1px 3px);
}

input {
  min-width: 0;
  height: 24px;
  padding: 0 4px;
  border: 2px solid;
  border-color: #808080 #fff #fff #808080;
  border-radius: 0;
  background: #fff;
  outline: 0;
}

.b {
  flex: none;
  display: grid;
  place-items: center;
  width: 27px;
  height: 27px;
  padding: 0;
  border: 2px solid;
  border-color: #fff #808080 #808080 #fff;
  background: #f0f0f0;
}
.b svg { width: 20px; height: 20px; }

.fly {
  position: relative;
  display: flex;
  align-items: center;
  width: 25px;
  height: 22px;
  padding: 0;
  border: 0;
  background: none;
}
.fly svg { width: 20px; height: 20px; background: #eeead8; }
.fly::after {
  content: "";
  position: absolute;
  right: 0;
  bottom: 0;
  border: solid transparent;
  border-width: 0 0 5px 5px;
  border-bottom-color: #000;
}
.fly.framed svg { outline: 1px solid #2a8ef0; }
.fly.plain svg { background: none; }

/* Menu and tool bars */
.menubar {
  display: flex;
  align-items: center;
  height: 28px;
  padding-left: 3px;
  white-space: nowrap;
}
.menubar a { margin-right: 18px; }
.logo { flex: none; width: 21px; height: 21px; margin: 0 11px 0 5px; }

.bar { display: flex; align-items: center; padding-left: 3px; }
.fields { height: 36px; }
.fields input { flex: none; margin-left: 5px; margin-right: 3px; }
.fields .grip + input { margin-left: 8px; }
.fields .tight { margin: 0 9px 0 2px; }
.w-name { width: 111px; }
.w-model { width: 137px; }
.w-height { width: 83px; }
.w-weight { width: 54px; }
.w-tin { width: 68px; }
.w-search { flex: none; width: 207px; margin: 0 3px 0 9px; }

.snaps { height: 33px; }
.letters { display: flex; gap: 4px; margin: 0 6px 0 5px; }
.letters button {
  height: 24px;
  padding: 0 6px;
  border: 2px solid;
  border-color: #fff #808080 #808080 #fff;
  background: #f0f0f0;
  font-size: 15px;
  line-height: 20px;
}
.letters .on { border-color: #808080 #fff #fff #808080; background: #f8f8f8; }
.flyouts { display: flex; gap: 7px; margin: 0 9px 0 10px; }
.snaps .b + .grip { margin-left: 9px; }
.snaps .grip ~ .grip + .flyouts { margin-left: 9px; }

/* Main area */
main { flex: 1; display: flex; }
.tools {
  flex: none;
  width: 41px;
  padding-top: 9px;
  border-left: 1px solid #dcdcdc;
}
.tools .grip { display: block; }
.stack {
  display: grid;
  grid-auto-rows: 1fr;
  height: 526px;
  padding: 4px 0 0 6px;
  align-items: center;
}
.stack .fly { height: 22px; }
.stack + .grip { margin-top: 7px; }
.second {
  display: flex;
  flex-direction: column;
  align-items: flex-start;
  gap: 5px;
  height: auto;
  padding-top: 8px;
}
.second .short { height: 10px; overflow: hidden; }
.second .short + .fly { margin-top: 3px; }

.work { flex: 1; min-width: 0; display: flex; flex-direction: column; padding-top: 7px; }
.view {
  flex: 1;
  display: flex;
  flex-direction: column;
  border: solid #757875;
  border-width: 3px 0 0 3px;
}
.viewbar {
  display: grid;
  grid-template-columns: repeat(16, 1fr);
  gap: 3px;
  width: 521px;
  max-width: 100%;
  height: 40px;
  padding: 4px 0 0 3px;
}
.viewbar .b { width: auto; height: 30px; }
.viewbar .b svg { padding: 1px; width: 22px; height: 22px; background: #edeadb; }
.viewbar .b.active { border-color: #777; background: #fafafa; }
.viewbar .b.active svg { background: none; }

.canvas { flex: 1; position: relative; overflow: hidden; background: #bbb; border-bottom: 2px solid #fff; }
.mesh, .balloons { position: absolute; inset: 0; width: 100%; height: 100%; }
.mesh { fill: none; stroke: #a826ff; stroke-width: 1.300px; }
.mesh g { stroke-width: 4px; }
.mesh .hit { fill: #f00; stroke: #ff6a20; stroke-width: 1px; }
.mesh .hit-edge { stroke: #2a5a70; stroke-width: 1px; stroke-dasharray: 3 4; }
.mesh circle { stroke: none; }
.balloons { pointer-events: none; fill: #fff; stroke: #4f5da8; stroke-width: 2px; }
.balloons .pointer { stroke: #000; stroke-width: 1px; }

.note {
  position: absolute;
  margin: 0;
  color: #000;
  font: 16px/19px "Liberation Sans", Arial, sans-serif;
  text-align: center;
  white-space: nowrap;
}
.n1 { left: 401px; top: 24px; width: 206px; }
.n2 { left: 403px; top: 78px; width: 171px; }
.n3 { left: 397px; top: 154px; width: 176px; }
.n4 { left: 443px; top: 227px; width: 248px; }
.n5 { left: 553px; top: 314px; width: 228px; }
.n6 { left: 254px; top: 379px; width: 164px; line-height: 18px; }

/* Dialog */
.dialog {
  position: absolute;
  left: 14px;
  top: 5px;
  width: 361px;
  background: #f0f0f0;
  box-shadow: 0 3px 12px rgba(0, 0, 0, .6);
}
.titlebar {
  display: flex;
  align-items: center;
  height: 38px;
  padding-left: 10px;
  background: #7b7372;
  color: #fff;
}
.titlebar > svg { width: 20px; height: 20px; }
.titlebar h1 { flex: 1; margin: 0 0 0 6px; font-size: 14px; font-weight: 400; }
.titlebar button { width: 58px; height: 38px; padding: 0; border: 0; background: none; color: #fff; }
.titlebar button svg { width: 12px; height: 12px; fill: none; stroke: currentColor; vertical-align: middle; }
.titlebar button:disabled { color: #9c9594; }

.panel { display: flex; flex-direction: column; gap: 3px; padding: 5px 5px 22px 6px; }
.row {
  display: grid;
  grid-template-columns: 108px 202px 28px;
  column-gap: 6px;
  height: 26px;
  align-items: center;
}
.row label { padding-bottom: 6px; }
.row input { width: 100%; height: 23px; padding: 0 1px; }
.row .b { width: 28px; height: 26px; }
.row .cream svg { background: #ece8d6; }

fieldset {
  min-width: 0;
  margin: -2px 2px 1px;
  padding: 11px 0 8px;
  border: 1px solid #a8a8a8;
  display: flex;
  flex-direction: column;
  gap: 3px;
}
legend { margin-left: 7px; padding: 0 4px; line-height: 21px; }
fieldset .row { grid-template-columns: 107px 140px 28px 28px; justify-content: start; }
fieldset label { padding-right: 6px; text-align: right; }
fieldset .b + .b { margin-left: 3px; }
.edit { position: relative; display: block; height: 23px; }
.edit input { display: block; }
.caret { position: absolute; left: 79px; top: 3px; width: 1px; height: 17px; background: #000; }

.status {
  display: block;
  height: 23px;
  margin: 0 2px;
  padding-left: 10px;
  border: 2px solid;
  border-color: #808080 #fff #fff #808080;
}
.actions { display: flex; gap: 86px; margin: 4px 0 0 84px; }
.actions button {
  width: 47px;
  height: 26px;
  padding: 0;
  border: 2px solid;
  border-color: #fff #808080 #808080 #fff;
  background: #f0f0f0;
}

/* View tabs and docked windows */
.tabs {
  display: flex;
  height: 32px;
  border-top: 2px solid #999;
  background: #f7f7f7;
  color: #999;
  font-size: 13px;
}
.tabs a {
  display: flex;
  align-items: center;
  gap: 3px;
  height: 28px;
  padding-left: 5px;
  white-space: nowrap;
}
.tabs a + a::after { content: ""; width: 1px; height: 18px; margin-left: 5px; background: #999; }
.tabs .current {
  padding: 0 7px 0 4px;
  border: solid #111;
  border-width: 0 2px 2px 0;
  background: #fff;
  color: #111;
  font-weight: 700;
}
.tabs svg { flex: none; width: 20px; height: 20px; }
.docks {
  display: flex;
  gap: 17px;
  margin-top: 24px;
  padding: 4px 0 0 2px;
  background: #f7f7f7;
}
.docks button {
  width: 167px;
  height: 25px;
  padding: 2px 5px 0;
  border: 1px solid #999;
  border-bottom: 0;
  background: #f0f0f0;
  color: #777;
  text-align: left;
}
.docks button + button { width: 175px; }
```
